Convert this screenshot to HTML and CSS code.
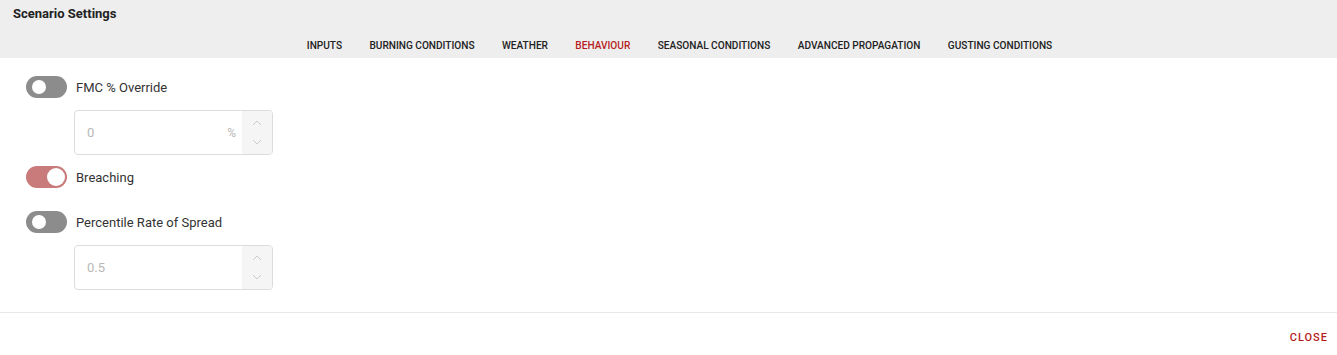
FILE: index.html
```html
<!DOCTYPE html>
<html lang="en">
<head>
    <meta charset="UTF-8">
    <title>Scenario Settings</title>
    <link rel="stylesheet" href="styles.css">
</head>
<body>
    <div class="dialog">
        <div class="header">
            <div class="title">Scenario Settings</div>
            <div class="tabs">
                <span class="tab">Inputs</span>
                <span class="tab">Burning Conditions</span>
                <span class="tab">Weather</span>
                <span class="tab active">Behaviour</span>
                <span class="tab">Seasonal Conditions</span>
                <span class="tab">Advanced Propagation</span>
                <span class="tab">Gusting Conditions</span>
            </div>
        </div>

        <div class="content">
            <label class="row">
                <span class="toggle"><span class="knob"></span></span>
                FMC % Override
            </label>
            <div class="field first">
                <span class="value">0</span>
                <span class="unit">%</span>
                <span class="spin">
                    <svg width="10" height="6" viewBox="0 0 10 6"><path d="M1 5 L5 1 L9 5" fill="none" stroke="#ccc" stroke-width="1"/></svg>
                    <svg width="10" height="6" viewBox="0 0 10 6"><path d="M1 1 L5 5 L9 1" fill="none" stroke="#ccc" stroke-width="1"/></svg>
                </span>
            </div>

            <label class="row">
                <span class="toggle on"><span class="knob"></span></span>
                Breaching
            </label>

            <label class="row spaced">
                <span class="toggle"><span class="knob"></span></span>
                Percentile Rate of Spread
            </label>
            <div class="field">
                <span class="value">0.5</span>
                <span class="spin">
                    <svg width="10" height="6" viewBox="0 0 10 6"><path d="M1 5 L5 1 L9 5" fill="none" stroke="#ccc" stroke-width="1"/></svg>
                    <svg width="10" height="6" viewBox="0 0 10 6"><path d="M1 1 L5 5 L9 1" fill="none" stroke="#ccc" stroke-width="1"/></svg>
                </span>
            </div>
        </div>

        <div class="footer">
            <button class="close">Close</button>
        </div>
    </div>
</body>
</html>
```

FILE: styles.css
```css
body {
    margin: 0;
    font-family: Roboto, "Liberation Sans", Arial, sans-serif;
    background-color: white;
    color: #333;
}
.header {
    background-color: #eeeeee;
    height: 58px;
    box-sizing: border-box;
    padding-top: 6px;
}
.title {
    font-size: 13px;
    font-weight: 700;
    color: #222;
    padding-left: 13px;
    line-height: 16px;
}
.tabs {
    display: flex;
    justify-content: center;
    padding-left: 22px;
    margin-top: 16px;
}
.tab {
    font-size: 10.1px;
    font-weight: 500;
    text-transform: uppercase;
    color: #222;
    padding: 0 13.7px;
    line-height: 16px;
}
.tab.active {
    color: #b71c1c;
}
.content {
    padding: 17px 26px 0;
    height: 255px;
    box-sizing: border-box;
    border-bottom: 1px solid #e8e8e8;
}
.row {
    display: flex;
    align-items: center;
    gap: 9px;
    height: 24px;
    font-size: 13px;
    color: #333;
}
.row.spaced {
    margin-top: 21px;
}
.toggle {
    position: relative;
    width: 41px;
    height: 22px;
    border-radius: 11px;
    background-color: #8c8c8c;
    flex-shrink: 0;
}
.toggle .knob {
    position: absolute;
    left: 6px;
    top: 4px;
    width: 14px;
    height: 14px;
    border-radius: 50%;
    background-color: white;
}
.toggle.on {
    background-color: #c97b7b;
}
.toggle.on .knob {
    left: auto;
    right: 2px;
    top: 2px;
    width: 18px;
    height: 18px;
}
.field {
    display: flex;
    align-items: center;
    margin: 11px 0 0 48px;
    width: 199px;
    height: 45px;
    box-sizing: border-box;
    border: 1px solid #dcdcdc;
    border-radius: 4px;
    overflow: hidden;
    font-size: 13px;
    color: #b8b8b8;
}
.field.first {
    margin: 11px 0 10px 48px;
}
.value {
    flex: 1;
    padding-left: 12px;
}
.unit {
    padding-right: 6px;
    font-size: 12px;
}
.spin {
    width: 30px;
    height: 100%;
    background-color: #f5f5f5;
    display: flex;
    flex-direction: column;
    align-items: center;
    justify-content: space-between;
    padding: 9px 0;
    box-sizing: border-box;
}
.footer {
    display: flex;
    justify-content: flex-end;
    padding: 18px 9px 0;
}
.close {
    border: none;
    background: none;
    font-family: inherit;
    font-size: 11px;
    font-weight: 500;
    letter-spacing: 1px;
    text-transform: uppercase;
    color: #b71c1c;
    padding: 0;
    cursor: pointer;
}
```
